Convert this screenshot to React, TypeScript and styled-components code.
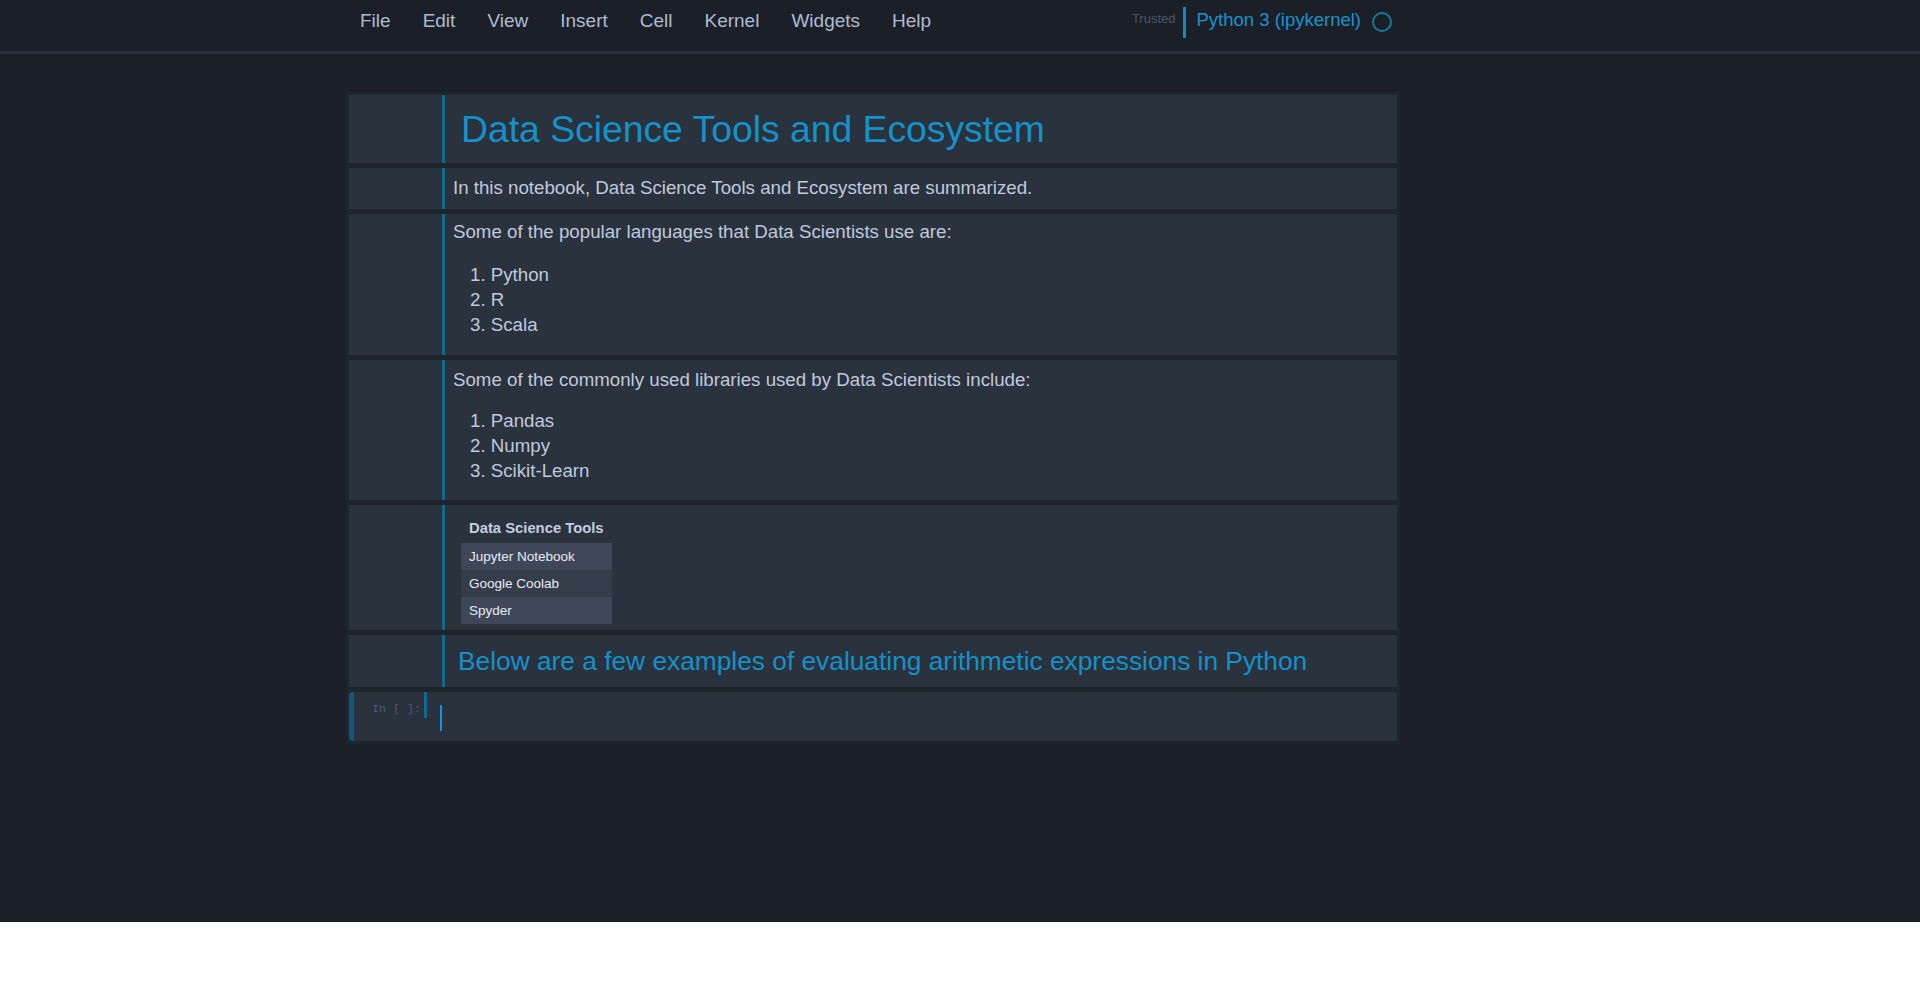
import React from "react";
import styled, { createGlobalStyle } from "styled-components";

const GlobalStyle = createGlobalStyle`
  html, body { margin: 0; padding: 0; background: #ffffff; }
  body { font-family: "Liberation Sans", Arial, sans-serif; }
  * { box-sizing: border-box; }
`;

const Page = styled.div`
  height: 922px;
  background: #1b2028;
  overflow: hidden;
`;

const Header = styled.header`
  height: 54px;
  border-bottom: 3px solid #2a313c;
`;

const HeaderInner = styled.div`
  margin-left: 346px;
  width: 1054px;
  height: 51px;
  display: flex;
  align-items: flex-start;
  justify-content: space-between;
`;

const Menu = styled.nav`
  display: flex;
  gap: 32px;
  padding-left: 14px;
  padding-top: 10px;
`;

const MenuItem = styled.span`
  font-size: 19px;
  line-height: 22px;
  color: #aebad2;
`;

const KernelArea = styled.div`
  display: flex;
  align-items: flex-start;
  padding-right: 8px;
`;

const Trusted = styled.span`
  font-size: 13px;
  line-height: 15px;
  margin-top: 11px;
  color: #4b5467;
`;

const KernelBar = styled.div`
  width: 3px;
  height: 31px;
  margin-top: 7px;
  margin-left: 8px;
  background: #1289c0;
`;

const KernelName = styled.span`
  font-size: 18.5px;
  line-height: 20px;
  margin-top: 10px;
  margin-left: 10px;
  color: #1a92cc;
`;

const KernelCircle = styled.div`
  width: 20px;
  height: 20px;
  margin-top: 12px;
  margin-left: 11px;
  border: 2px solid #17799f;
  border-radius: 50%;
`;

const Notebook = styled.main`
  margin-left: 346px;
  margin-top: 38px;
  width: 1054px;
  background: #1f252d;
  padding: 3px;
  display: flex;
  flex-direction: column;
  gap: 5px;
`;

const MdCell = styled.section`
  display: flex;
  background: #2a323d;
`;

const PromptArea = styled.div`
  width: 93px;
  flex: none;
`;

const MdContent = styled.div<{ $pad: string }>`
  flex: 1;
  border-left: 3px solid #0f6a8e;
  padding: ${(p) => p.$pad};
`;

const H1 = styled.h1`
  margin: 0;
  font-size: 37.3px;
  line-height: 41px;
  font-weight: normal;
  color: #1591c9;
`;

const H3 = styled.h3`
  margin: 0;
  font-size: 26.3px;
  line-height: 30px;
  font-weight: normal;
  color: #1591c9;
`;

const P = styled.p<{ $mb?: number }>`
  margin: 0 0 ${(p) => p.$mb ?? 0}px 0;
  font-size: 18.7px;
  line-height: 25px;
  color: #c0c9de;
`;

const OL = styled.ol`
  margin: 0;
  padding-left: 17px;
  list-style: decimal inside;
  font-size: 18.7px;
  line-height: 25px;
  color: #c0c9de;
`;

const Table = styled.table`
  border-collapse: collapse;
`;

const Th = styled.th`
  height: 30px;
  padding: 0 8px;
  text-align: left;
  font-size: 14.8px;
  font-weight: bold;
  color: #c5cde0;
`;

const Tr = styled.tr<{ $odd: boolean }>`
  background: ${(p) => (p.$odd ? "#3e4657" : "#363d4a")};
`;

const Td = styled.td`
  height: 27px;
  padding: 0 8px;
  font-size: 13.5px;
  color: #e6ebf5;
`;

const CodeCell = styled.section`
  display: flex;
  height: 49px;
  background: #2a323d;
  border-left: 5px solid #0b5b7c;
  border-radius: 4px;
`;

const CodePrompt = styled.div`
  width: 73px;
  height: 26px;
  flex: none;
  padding-top: 10px;
  padding-right: 3px;
  text-align: right;
  border-right: 3px solid #0e6b8f;
  font-family: "Liberation Mono", "DejaVu Sans Mono", monospace;
  font-size: 11.7px;
  line-height: 14px;
  color: #4c5a78;
  white-space: pre;
`;

const Editor = styled.div`
  flex: 1;
  padding-left: 13px;
  padding-top: 13px;
`;

const Cursor = styled.div`
  width: 2px;
  height: 26px;
  background: #168fe8;
`;

const menu = ["File", "Edit", "View", "Insert", "Cell", "Kernel", "Widgets", "Help"];

export default function App() {
  return (
    <>
      <GlobalStyle />
      <Page>
        <Header>
          <HeaderInner>
            <Menu>
              {menu.map((m) => (
                <MenuItem key={m}>{m}</MenuItem>
              ))}
            </Menu>
            <KernelArea>
              <Trusted>Trusted</Trusted>
              <KernelBar />
              <KernelName>Python 3 (ipykernel)</KernelName>
              <KernelCircle />
            </KernelArea>
          </HeaderInner>
        </Header>
        <Notebook>
          <MdCell>
            <PromptArea />
            <MdContent $pad="14px 8px 13px 16px">
              <H1>Data Science Tools and Ecosystem</H1>
            </MdContent>
          </MdCell>
          <MdCell>
            <PromptArea />
            <MdContent $pad="7px 8px 9px 8px">
              <P>In this notebook, Data Science Tools and Ecosystem are summarized.</P>
            </MdContent>
          </MdCell>
          <MdCell>
            <PromptArea />
            <MdContent $pad="5px 8px 18px 8px">
              <P $mb={18}>Some of the popular languages that Data Scientists use are:</P>
              <OL>
                <li>Python</li>
                <li>R</li>
                <li>Scala</li>
              </OL>
            </MdContent>
          </MdCell>
          <MdCell>
            <PromptArea />
            <MdContent $pad="7px 8px 17px 8px">
              <P $mb={16}>Some of the commonly used libraries used by Data Scientists include:</P>
              <OL>
                <li>Pandas</li>
                <li>Numpy</li>
                <li>Scikit-Learn</li>
              </OL>
            </MdContent>
          </MdCell>
          <MdCell>
            <PromptArea />
            <MdContent $pad="8px 8px 6px 16px">
              <Table>
                <thead>
                  <tr>
                    <Th>Data Science Tools</Th>
                  </tr>
                </thead>
                <tbody>
                  {["Jupyter Notebook", "Google Coolab", "Spyder"].map((t, i) => (
                    <Tr key={t} $odd={i % 2 === 0}>
                      <Td>{t}</Td>
                    </Tr>
                  ))}
                </tbody>
              </Table>
            </MdContent>
          </MdCell>
          <MdCell>
            <PromptArea />
            <MdContent $pad="11px 8px 11px 13px">
              <H3>Below are a few examples of evaluating arithmetic expressions in Python</H3>
            </MdContent>
          </MdCell>
          <CodeCell>
            <CodePrompt>{"In [ ]:"}</CodePrompt>
            <Editor>
              <Cursor />
            </Editor>
          </CodeCell>
        </Notebook>
      </Page>
    </>
  );
}
